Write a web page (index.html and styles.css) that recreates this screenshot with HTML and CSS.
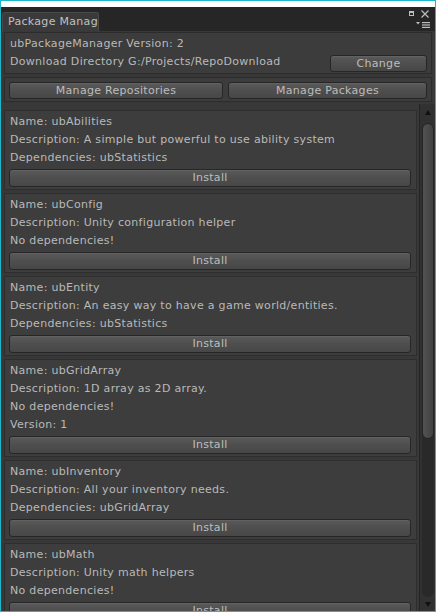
FILE: index.html
```html
<!DOCTYPE html>
<html>
<head>
<meta charset="utf-8">
<link rel="stylesheet" href="styles.css">
</head>
<body>
<div class="window">
  <div class="topstrip"></div>
  <div class="tabbar">
    <div class="tab">Package Manager</div>
    <svg class="winicons" width="28" height="24" viewBox="0 0 28 24">
      <rect x="2.5" y="4.5" width="4" height="4" fill="none" stroke="#bdbdbd" stroke-width="1"/>
      <rect x="2" y="4" width="5" height="2" fill="#bdbdbd"/>
      <path d="M14.5 3.5 L21.5 10.5 M21.5 3.5 L14.5 10.5" stroke="#bdbdbd" stroke-width="1.2" fill="none"/>
      <polygon points="9,15 13,15 11,17.5" fill="#bdbdbd"/>
      <rect x="15" y="15" width="8" height="1.2" fill="#bdbdbd"/>
      <rect x="15" y="17.4" width="8" height="1.2" fill="#bdbdbd"/>
      <rect x="15" y="19.8" width="8" height="1.2" fill="#bdbdbd"/>
    </svg>
  </div>
  <div class="content">
    <div class="box header">
      <div class="line">ubPackageManager Version: 2</div>
      <div class="row">
        <span class="line">Download Directory G:/Projects/RepoDownload</span>
        <button class="btn change">Change</button>
      </div>
    </div>
    <div class="box nav">
      <button class="btn">Manage Repositories</button>
      <button class="btn">Manage Packages</button>
    </div>
    <div class="scrollview">
      <div class="list">
        <div class="card">
          <div class="line">Name: ubAbilities</div>
          <div class="line">Description: A simple but powerful to use ability system</div>
          <div class="line">Dependencies: ubStatistics</div>
          <button class="btn install">Install</button>
        </div>
        <div class="card">
          <div class="line">Name: ubConfig</div>
          <div class="line">Description: Unity configuration helper</div>
          <div class="line">No dependencies!</div>
          <button class="btn install">Install</button>
        </div>
        <div class="card">
          <div class="line">Name: ubEntity</div>
          <div class="line">Description: An easy way to have a game world/entities.</div>
          <div class="line">Dependencies: ubStatistics</div>
          <button class="btn install">Install</button>
        </div>
        <div class="card">
          <div class="line">Name: ubGridArray</div>
          <div class="line">Description: 1D array as 2D array.</div>
          <div class="line">No dependencies!</div>
          <div class="line">Version: 1</div>
          <button class="btn install">Install</button>
        </div>
        <div class="card">
          <div class="line">Name: ubInventory</div>
          <div class="line">Description: All your inventory needs.</div>
          <div class="line">Dependencies: ubGridArray</div>
          <button class="btn install">Install</button>
        </div>
        <div class="card">
          <div class="line">Name: ubMath</div>
          <div class="line">Description: Unity math helpers</div>
          <div class="line">No dependencies!</div>
          <button class="btn install">Install</button>
        </div>
      </div>
      <div class="scrollbar">
        <div class="arrow-area top"><span class="tri up"></span></div>
        <div class="groove"><div class="thumb"></div></div>
        <div class="arrow-area bottom"><span class="tri down"></span></div>
      </div>
    </div>
  </div>
</div>
</body>
</html>
```

FILE: styles.css
```css
html, body {
  margin: 0;
  padding: 0;
}
body {
  background: #ffffff;
  font-family: "DejaVu Sans", sans-serif;
  font-size: 11px;
  letter-spacing: 0.3px;
  color: #b9b9b9;
}
.window {
  box-sizing: border-box;
  width: 436px;
  height: 612px;
  border: 1px solid #1db7cb;
  display: flex;
  flex-direction: column;
  background: #383838;
  overflow: hidden;
}
.topstrip {
  height: 6px;
  background: #ffffff;
  flex: none;
}
.tabbar {
  height: 24px;
  flex: none;
  background: #262626;
  display: flex;
  align-items: flex-end;
}
.tab {
  box-sizing: border-box;
  margin-left: 1px;
  width: 97px;
  height: 19px;
  background: #3a3a3a;
  border: 1px solid #4a4a4a;
  border-bottom: none;
  border-radius: 3px 3px 0 0;
  padding-left: 5px;
  line-height: 18px;
  white-space: nowrap;
  overflow: hidden;
  color: #c0c0c0;
}
.winicons {
  margin-left: auto;
  align-self: stretch;
  display: block;
}
.content {
  flex: 1;
  min-height: 0;
  display: flex;
  flex-direction: column;
  padding: 1px 0 0 3px;
}
.box {
  border: 1px solid #2c2c2c;
  background: #3c3c3c;
  margin-right: 3px;
  flex: none;
}
.line {
  line-height: 18px;
  white-space: nowrap;
}
.header {
  padding: 2px 4px 1px 5px;
}
.row {
  display: flex;
  justify-content: space-between;
  align-items: flex-start;
  height: 19px;
}
.btn {
  box-sizing: border-box;
  display: block;
  margin: 0;
  padding: 0;
  font-family: "DejaVu Sans", sans-serif;
  font-size: 11px;
  letter-spacing: 0.3px;
  color: #bdbdbd;
  background: linear-gradient(to bottom, #5a5a5a 0%, #4f4f4f 45%, #474747 100%);
  border: 1px solid #262626;
  border-radius: 3px;
  box-shadow: inset 0 1px 0 #626262;
  height: 17px;
  line-height: 15px;
  text-align: center;
}
.change {
  width: 97px;
  margin-top: 2px;
}
.nav {
  margin-top: 3px;
  padding: 4px 4px 2px 4px;
  display: grid;
  grid-template-columns: 214px 1fr;
  gap: 5px;
}
.nav .btn {
  width: 100%;
}
.scrollview {
  flex: 1;
  min-height: 0;
  margin-top: 2px;
  display: flex;
  overflow: hidden;
}
.list {
  flex: 1;
  min-width: 0;
  padding-top: 6px;
  overflow: hidden;
}
.card {
  border: 1px solid #2e2e2e;
  background: #3d3d3d;
  padding: 2px 5px 2px 4px;
  margin-bottom: 3px;
}
.card .line {
  padding-left: 1px;
}
.install {
  width: 100%;
  height: 18px;
  line-height: 16px;
  margin-top: 2px;
}
.scrollbar {
  flex: none;
  width: 15px;
  margin-left: 2px;
  border-left: 1px solid #242424;
  background: #313131;
  display: flex;
  flex-direction: column;
  align-items: center;
}
.arrow-area {
  flex: none;
  display: flex;
  justify-content: center;
}
.arrow-area.top {
  height: 19px;
  align-items: flex-start;
  padding-top: 6px;
  box-sizing: border-box;
}
.arrow-area.bottom {
  height: 14px;
  align-items: flex-start;
  padding-top: 5px;
  box-sizing: border-box;
}
.tri {
  width: 0;
  height: 0;
  border-left: 3px solid transparent;
  border-right: 3px solid transparent;
}
.tri.up {
  border-bottom: 5px solid #111111;
}
.tri.down {
  border-top: 5px solid #111111;
}
.groove {
  flex: 1;
  width: 12px;
  background: #292929;
  border-radius: 6px;
  display: flex;
  flex-direction: column;
}
.thumb {
  box-sizing: border-box;
  height: 316px;
  width: 12px;
  border: 1px solid #242424;
  border-radius: 6px;
  background: linear-gradient(to right, #525252 0%, #4a4a4a 50%, #414141 100%);
}
```
